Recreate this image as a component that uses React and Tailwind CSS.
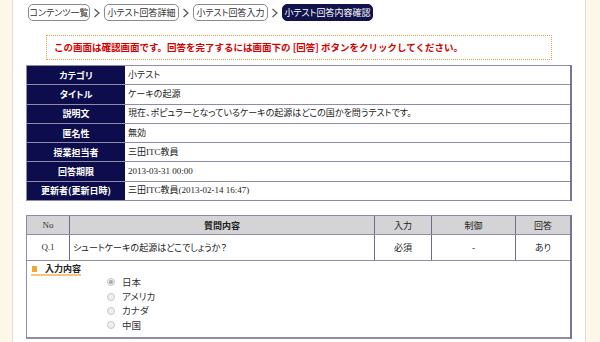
import React from "react";

const jp = "font-['Noto_Sans_CJK_JP',sans-serif] [font-feature-settings:'palt']";
const serif = "font-['Liberation_Serif','Noto_Sans_CJK_JP',serif] [font-feature-settings:'palt']";

function Chevron() {
  return (
    <svg width="8" height="10" viewBox="0 0 8 10" className="shrink-0">
      <polyline points="1.5,1 6,5 1.5,9" fill="none" stroke="#555" strokeWidth="1.2" />
    </svg>
  );
}

function Crumb({ children, w, active }) {
  return (
    <div
      className={
        "h-[17px] flex items-center justify-center rounded-[5px] text-[9px] leading-none " +
        jp +
        " " +
        w +
        " " +
        (active ? "bg-[#12124c] text-white border border-[#12124c]" : "border border-[#8a8a8a] text-[#333] bg-white")
      }
    >
      {children}
    </div>
  );
}

const info = [
  ["カテゴリ", "小テスト"],
  ["タイトル", "ケーキの起源"],
  ["説明文", "現在、ポピュラーとなっているケーキの起源はどこの国かを問うテストです。"],
  ["匿名性", "無効"],
  ["授業担当者", "三田ITC教員"],
  ["回答期限", "2013-03-31 00:00"],
  ["更新者(更新日時)", "三田ITC教員(2013-02-14 16:47)"],
];

function Radio({ checked, label }) {
  return (
    <div className="h-[14.4px] flex items-center">
      <span className="w-[8px] h-[8px] rounded-full border border-[#c8c8c8] bg-[#efefef] flex items-center justify-center">
        {checked && <span className="w-[4px] h-[4px] rounded-full bg-[#a8a8a8]" />}
      </span>
      <span className={"ml-[7px] text-[9.5px] leading-none text-[#333] " + jp}>{label}</span>
    </div>
  );
}

export default function App() {
  return (
    <div className="w-[600px] h-[342px] flex bg-[#fdf7ea] overflow-hidden leading-none">
      <div className="w-[12px] shrink-0" />
      <div className="w-[574px] shrink-0 bg-white border-l border-r border-[#e2ddd0] flex flex-col">
        {/* breadcrumb */}
        <div className="pt-[4px] pl-[15px] flex items-center gap-[3px]">
          <Crumb w="w-[62px]">コンテンツ一覧</Crumb>
          <div className="w-[8px] flex justify-center"><Chevron /></div>
          <Crumb w="w-[75px]">小テスト回答詳細</Crumb>
          <div className="w-[8px] flex justify-center"><Chevron /></div>
          <Crumb w="w-[75px]">小テスト回答入力</Crumb>
          <div className="w-[8px] flex justify-center"><Chevron /></div>
          <Crumb w="w-[91px]" active>小テスト回答内容確認</Crumb>
        </div>

        {/* warning */}
        <div className="mt-[14px] ml-[33px] w-[506px] h-[25px] border border-dotted border-[#dca23a] flex items-center pl-[7px]">
          <span className="text-[9.5px] font-bold text-[#d40000] leading-none font-['Noto_Sans_CJK_JP',sans-serif]">
            この画面は確認画面です。回答を完了するには画面下の [回答] ボタンをクリックしてください。
          </span>
        </div>

        {/* info table */}
        <div className="mt-[5px] ml-[13px] w-[546px] border-t border-l border-r-2 border-[#8e8ca6] border-r-[#77758f]">
          {info.map(([k, v]) => (
            <div key={k} className="h-[19.3px] flex border-b border-[#8e8ca6]">
              <div className={"w-[98px] shrink-0 bg-[#0d0d4d] text-white font-bold text-[9px] leading-none flex items-center justify-center " + jp}>
                {k}
              </div>
              <div className={"flex-1 flex items-center pl-[3px] text-[9px] leading-none text-[#222] " + serif}>
                {v}
              </div>
            </div>
          ))}
        </div>

        {/* question table */}
        <div className="mt-[14px] ml-[13px] w-[546px] border-t border-l border-r-2 border-[#8e8ca6] border-r-[#77758f]">
          <div className="h-[19px] grid grid-cols-[43px_305px_57px_84px_1fr] bg-[#d4d4d6] border-b border-[#8e8ca6]">
            <div className={"flex items-center justify-center border-r border-[#6e6c8a] text-[9px] text-[#333] " + serif}>No</div>
            <div className={"flex items-center justify-center border-r border-[#6e6c8a] text-[9px] text-[#222] font-bold " + jp}>質問内容</div>
            <div className={"flex items-center justify-center border-r border-[#6e6c8a] text-[9px] text-[#222] " + jp}>入力</div>
            <div className={"flex items-center justify-center border-r border-[#6e6c8a] text-[9px] text-[#222] " + jp}>制御</div>
            <div className={"flex items-center justify-center text-[9px] text-[#222] " + jp}>回答</div>
          </div>
          <div className="h-[26px] grid grid-cols-[43px_305px_57px_84px_1fr] border-b border-[#8e8ca6]">
            <div className={"flex items-center justify-center border-r border-[#6e6c8a] text-[9px] text-[#333] " + serif}>Q.1</div>
            <div className={"flex items-center pl-[3px] border-r border-[#6e6c8a] text-[9px] text-[#222] " + jp}>シュートケーキの起源はどこでしょうか？</div>
            <div className={"flex items-center justify-center border-r border-[#6e6c8a] text-[9px] text-[#222] " + jp}>必須</div>
            <div className={"flex items-center justify-center border-r border-[#6e6c8a] text-[9px] text-[#222] " + jp}>-</div>
            <div className={"flex items-center justify-center text-[9px] text-[#222] " + jp}>あり</div>
          </div>
          <div className="h-[78px] border-b-2 border-[#8e8ca6] flex flex-col">
            <div className="flex pl-[4px] pt-[2px]">
              <div className="flex items-center w-[50px] h-[13px] border-b-2 border-[#f2c878]">
                <span className="w-[5px] h-[6px] bg-[#f3a52c] ml-[1px]" />
                <span className={"ml-[8px] text-[9px] font-bold leading-none text-[#222] " + jp}>入力内容</span>
              </div>
            </div>
            <div className="ml-[80px] mt-[-1px] flex flex-col">
              <Radio checked label="日本" />
              <Radio label="アメリカ" />
              <Radio label="カナダ" />
              <Radio label="中国" />
            </div>
          </div>
        </div>
      </div>
      <div className="flex-1" />
    </div>
  );
}
